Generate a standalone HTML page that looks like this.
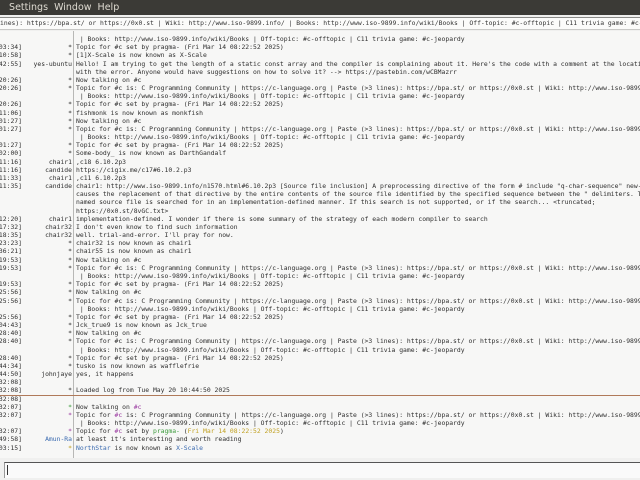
<!DOCTYPE html>
<html><head><meta charset="utf-8"><style>
*{margin:0;padding:0;box-sizing:border-box}
body{width:640px;height:480px;overflow:hidden;background:#f0f0ef;font-family:"DejaVu Sans Mono","Liberation Mono",monospace;position:relative}
#menu{position:absolute;left:0;top:0;width:640px;height:15px;background:#3b3a36;color:#dfdbd2;font-family:"DejaVu Sans","Liberation Sans",sans-serif;font-size:9.5px;line-height:15px;white-space:pre}
#topic{position:absolute;left:0;top:17px;width:640px;height:13px;background:#fbfbfa;border-top:1px solid #8a8a88;border-bottom:1px solid #c8c8c6;font-size:6.4px;line-height:11px;white-space:pre;color:#333;overflow:hidden}
#log{position:absolute;left:0;top:31px;width:640px;height:427px;background:#f7f7f6;overflow:hidden}
#sep{position:absolute;left:73px;top:0;width:1px;height:427px;background:#b8b8b6}
#rows{position:absolute;left:0;top:4px;width:640px}
.r{height:8.18px;line-height:8.18px;font-size:6.4px;color:#2e2e2e;white-space:pre;position:relative}
.t{position:absolute;right:618px;top:0}
.n{position:absolute;right:568px;top:0}
.m{position:absolute;left:76px;top:0}
#div{position:absolute;left:0;top:364px;width:640px;height:1px;background:#b07a5a}
#inp{position:absolute;left:4px;top:462px;width:640px;height:16px;border-top:1px solid #555;border-left:1px solid #999;background:#fafafa}
#cur{position:absolute;left:7px;top:465px;width:1px;height:10px;background:#333}
.g{color:#3a9a3a}.p{color:#9a3aa0}.y{color:#c0a020}.b{color:#3a6ab0}
</style></head><body>
<div id="menu">   Settings  Window  Help</div>
<div id="topic">ines): https://bpa.st/ or https://0x0.st | Wiki: http://www.iso-9899.info/ | Books: http://www.iso-9899.info/wiki/Books | Off-topic: #c-offtopic | C11 trivia game: #c-jeopardy</div>
<div id="log"><div id="sep"></div><div id="div"></div><div id="rows">
<div class="r"><span class="m"> | Books: http://www.iso-9899.info/wiki/Books | Off-topic: #c-offtopic | C11 trivia game: #c-jeopardy</span></div>
<div class="r"><span class="t">03:34]</span><span class="n">*</span><span class="m">Topic for #c set by pragma- (Fri Mar 14 08:22:52 2025)</span></div>
<div class="r"><span class="t">10:58]</span><span class="n">*</span><span class="m">[1]X-Scale is now known as X-Scale</span></div>
<div class="r"><span class="t">42:55]</span><span class="n">yes-ubuntu</span><span class="m">Hello! I am trying to get the length of a static const array and the compiler is complaining about it. Here's the code with a comment at the location</span></div>
<div class="r"><span class="m">with the error. Anyone would have suggestions on how to solve it? --> https://pastebin.com/wCBMazrr</span></div>
<div class="r"><span class="t">20:26]</span><span class="n">*</span><span class="m">Now talking on #c</span></div>
<div class="r"><span class="t">20:26]</span><span class="n">*</span><span class="m">Topic for #c is: C Programming Community | https://c-language.org | Paste (>3 lines): https://bpa.st/ or https://0x0.st | Wiki: http://www.iso-9899</span></div>
<div class="r"><span class="m"> | Books: http://www.iso-9899.info/wiki/Books | Off-topic: #c-offtopic | C11 trivia game: #c-jeopardy</span></div>
<div class="r"><span class="t">20:26]</span><span class="n">*</span><span class="m">Topic for #c set by pragma- (Fri Mar 14 08:22:52 2025)</span></div>
<div class="r"><span class="t">11:06]</span><span class="n">*</span><span class="m">fishmonk is now known as monkfish</span></div>
<div class="r"><span class="t">01:27]</span><span class="n">*</span><span class="m">Now talking on #c</span></div>
<div class="r"><span class="t">01:27]</span><span class="n">*</span><span class="m">Topic for #c is: C Programming Community | https://c-language.org | Paste (>3 lines): https://bpa.st/ or https://0x0.st | Wiki: http://www.iso-9899</span></div>
<div class="r"><span class="m"> | Books: http://www.iso-9899.info/wiki/Books | Off-topic: #c-offtopic | C11 trivia game: #c-jeopardy</span></div>
<div class="r"><span class="t">01:27]</span><span class="n">*</span><span class="m">Topic for #c set by pragma- (Fri Mar 14 08:22:52 2025)</span></div>
<div class="r"><span class="t">02:00]</span><span class="n">*</span><span class="m">Some-body_ is now known as DarthGandalf</span></div>
<div class="r"><span class="t">11:16]</span><span class="n">chair1</span><span class="m">,c18 6.10.2p3</span></div>
<div class="r"><span class="t">11:16]</span><span class="n">candide</span><span class="m">https://cigix.me/c17#6.10.2.p3</span></div>
<div class="r"><span class="t">11:33]</span><span class="n">chair1</span><span class="m">,c11 6.10.2p3</span></div>
<div class="r"><span class="t">11:35]</span><span class="n">candide</span><span class="m">chair1: http://www.iso-9899.info/n1570.html#6.10.2p3 [Source file inclusion] A preprocessing directive of the form # include "q-char-sequence" new-line</span></div>
<div class="r"><span class="m">causes the replacement of that directive by the entire contents of the source file identified by the specified sequence between the " delimiters. The</span></div>
<div class="r"><span class="m">named source file is searched for in an implementation-defined manner. If this search is not supported, or if the search... &lt;truncated;</span></div>
<div class="r"><span class="m">https://0x0.st/8vGC.txt></span></div>
<div class="r"><span class="t">12:20]</span><span class="n">chair1</span><span class="m">implementation-defined. I wonder if there is some summary of the strategy of each modern compiler to search</span></div>
<div class="r"><span class="t">17:32]</span><span class="n">chair32</span><span class="m">I don't even know to find such information</span></div>
<div class="r"><span class="t">18:35]</span><span class="n">chair32</span><span class="m">well. trial-and-error. I'll pray for now.</span></div>
<div class="r"><span class="t">23:23]</span><span class="n">*</span><span class="m">chair32 is now known as chair1</span></div>
<div class="r"><span class="t">36:21]</span><span class="n">*</span><span class="m">chair55 is now known as chair1</span></div>
<div class="r"><span class="t">19:53]</span><span class="n">*</span><span class="m">Now talking on #c</span></div>
<div class="r"><span class="t">19:53]</span><span class="n">*</span><span class="m">Topic for #c is: C Programming Community | https://c-language.org | Paste (>3 lines): https://bpa.st/ or https://0x0.st | Wiki: http://www.iso-9899</span></div>
<div class="r"><span class="m"> | Books: http://www.iso-9899.info/wiki/Books | Off-topic: #c-offtopic | C11 trivia game: #c-jeopardy</span></div>
<div class="r"><span class="t">19:53]</span><span class="n">*</span><span class="m">Topic for #c set by pragma- (Fri Mar 14 08:22:52 2025)</span></div>
<div class="r"><span class="t">25:56]</span><span class="n">*</span><span class="m">Now talking on #c</span></div>
<div class="r"><span class="t">25:56]</span><span class="n">*</span><span class="m">Topic for #c is: C Programming Community | https://c-language.org | Paste (>3 lines): https://bpa.st/ or https://0x0.st | Wiki: http://www.iso-9899</span></div>
<div class="r"><span class="m"> | Books: http://www.iso-9899.info/wiki/Books | Off-topic: #c-offtopic | C11 trivia game: #c-jeopardy</span></div>
<div class="r"><span class="t">25:56]</span><span class="n">*</span><span class="m">Topic for #c set by pragma- (Fri Mar 14 08:22:52 2025)</span></div>
<div class="r"><span class="t">04:43]</span><span class="n">*</span><span class="m">Jck_true9 is now known as Jck_true</span></div>
<div class="r"><span class="t">28:40]</span><span class="n">*</span><span class="m">Now talking on #c</span></div>
<div class="r"><span class="t">28:40]</span><span class="n">*</span><span class="m">Topic for #c is: C Programming Community | https://c-language.org | Paste (>3 lines): https://bpa.st/ or https://0x0.st | Wiki: http://www.iso-9899</span></div>
<div class="r"><span class="m"> | Books: http://www.iso-9899.info/wiki/Books | Off-topic: #c-offtopic | C11 trivia game: #c-jeopardy</span></div>
<div class="r"><span class="t">28:40]</span><span class="n">*</span><span class="m">Topic for #c set by pragma- (Fri Mar 14 08:22:52 2025)</span></div>
<div class="r"><span class="t">44:34]</span><span class="n">*</span><span class="m">tusko is now known as wafflefrie</span></div>
<div class="r"><span class="t">44:50]</span><span class="n">johnjaye</span><span class="m">yes, it happens</span></div>
<div class="r"><span class="t">32:08]</span></div>
<div class="r"><span class="t">32:08]</span><span class="n">*</span><span class="m">Loaded log from Tue May 20 10:44:50 2025</span></div>
<div class="r"><span class="t">32:08]</span></div>
<div class="r"><span class="t">32:07]</span><span class="n g">*</span><span class="m">Now talking on <span class="p">#c</span></span></div>
<div class="r"><span class="t">32:07]</span><span class="n p">*</span><span class="m">Topic for <span class="p">#c</span> is: C Programming Community | https://c-language.org | Paste (>3 lines): https://bpa.st/ or https://0x0.st | Wiki: http://www.iso-9899</span></div>
<div class="r"><span class="m"> | Books: http://www.iso-9899.info/wiki/Books | Off-topic: #c-offtopic | C11 trivia game: #c-jeopardy</span></div>
<div class="r"><span class="t">32:07]</span><span class="n p">*</span><span class="m">Topic for <span class="p">#c</span> set by <span class="g">pragma-</span> (<span class="y">Fri Mar 14 08:22:52 2025</span>)</span></div>
<div class="r"><span class="t">49:58]</span><span class="n b">Amun-Ra</span><span class="m">at least it's interesting and worth reading</span></div>
<div class="r"><span class="t">03:15]</span><span class="n y">*</span><span class="m"><span class="b">NorthStar</span> is now known as <span class="b">X-Scale</span></span></div>
</div></div>
<div id="inp"></div><div id="cur"></div>
</body></html>
